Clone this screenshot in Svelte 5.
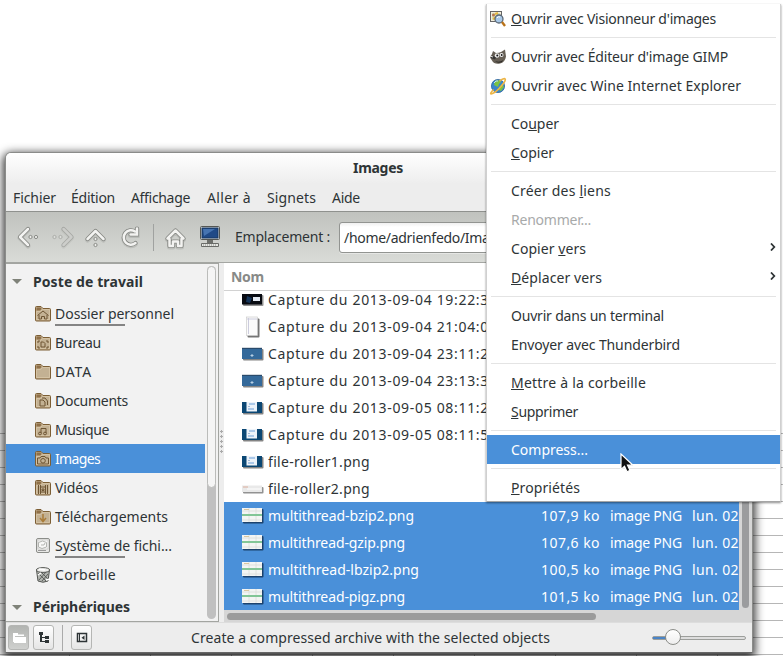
<script>
  function fit(node, width) {
    if (!width) return;
    const natural = node.getBoundingClientRect().width;
    const count = node.textContent.length;
    node.style.letterSpacing = `${(width - natural) / count}px`;
  }

  const menu = [
    { pre: '', key: 'O', post: "uvrir avec Visionneur d'images", w: 205, icon: 'viewer' },
    null,
    { pre: "Ouvrir avec Éditeur d'image GIMP", w: 217, icon: 'gimp' },
    { pre: 'Ouvrir avec Wine Internet Explorer', w: 230, icon: 'ie' },
    null,
    { pre: 'Co', key: 'u', post: 'per', w: 48 },
    { pre: '', key: 'C', post: 'opier', w: 43 },
    null,
    { pre: 'Créer des ', key: 'l', post: 'iens', w: 100 },
    { pre: 'Renommer...', w: 80, off: true },
    { pre: 'Copier ', key: 'v', post: 'ers', w: 75, sub: true },
    { pre: '', key: 'D', post: 'éplacer vers', w: 91, sub: true },
    null,
    { pre: 'Ouvrir dans un terminal', w: 153 },
    { pre: 'Envoyer avec Thunderbird', w: 169 },
    null,
    { pre: '', key: 'M', post: 'ettre à la corbeille', w: 135 },
    { pre: '', key: 'S', post: 'upprimer', w: 67 },
    null,
    { pre: 'Compress...', w: 77, on: true },
    null,
    { pre: '', key: 'P', post: 'ropriétés', w: 69 }
  ];

  const bar = [['Fichier', 43, 15], ['Édition', 44, 16], ['Affichage', 59, 17], ['Aller à', 44, 16], ['Signets', 49, 16], ['Aide', 28, 0]];

  const places = [
    ['Dossier personnel', 119, 'home', true],
    ['Bureau', 46, 'desk'],
    ['DATA', 37, 'plain'],
    ['Documents', 73, 'doc'],
    ['Musique', 54, 'music'],
    ['Images', 45, 'photo'],
    ['Vidéos', 43, 'video'],
    ['Téléchargements', 113, 'down'],
    ['Système de fichi...', 117, 'disk', true],
    ['Corbeille', 61, 'trash']
  ];

  const files = [
    ['Capture du 2013-09-04 19:22:32.png', 262, 'dark'],
    ['Capture du 2013-09-04 21:04:03.png', 262, 'page'],
    ['Capture du 2013-09-04 23:11:24.png', 262, 'blue'],
    ['Capture du 2013-09-04 23:13:33.png', 262, 'blue'],
    ['Capture du 2013-09-05 08:11:25.png', 262, 'shot'],
    ['Capture du 2013-09-05 08:11:53.png', 262, 'shot'],
    ['file-roller1.png', 102, 'shot'],
    ['file-roller2.png', 102, 'strip'],
    ['multithread-bzip2.png', 146, 'sheet', '107,9 ko'],
    ['multithread-gzip.png', 137, 'sheet', '107,6 ko'],
    ['multithread-lbzip2.png', 151, 'sheet', '100,5 ko'],
    ['multithread-pigz.png', 137, 'sheet', '101,5 ko']
  ];
</script>

{#snippet placeIcon(kind)}
  <svg class="pi" width="16" height="16" viewBox="0 0 16 16">
    {#if kind === 'disk'}
      <rect x="1.500" y=".5" width="13" height="14" rx="1.500" fill="#e8e8e6" stroke="#8b8d89" />
      <rect x="3" y="2" width="10" height="9" fill="#f8f8f7" stroke="#bbb" stroke-width=".6" />
      <path d="M3.500 9V4.500q4-3 8 0v4.500q-5 3-8 0M6 7q4 1 4-2" fill="none" stroke="#b3b5b1" />
      <path d="M3 12.500h8" stroke="#999" />
    {:else if kind === 'trash'}
      <path d="M1.500 3l1.500 11q5 2.500 10 0l1.500-11z" fill="#b2b5b0" stroke="#555753" />
      <ellipse cx="8" cy="3" rx="6.700" ry="2.400" fill="#eeeeec" stroke="#555753" />
      <path d="M3 6l8 8M6 5l7 7M11 5l-7 8M13 7l-6 7" stroke="#555753" stroke-width=".9" />
      <path d="M4 2l6 1M3 8l3-2M11 13l4-1" stroke="#fff" stroke-width="1.400" />
    {:else}
      <path d="M.5 14V1.500q0-1 1-1h4.500l2 2h6.500q1 0 1 1V14q0 1-1 1h-13q-1 0-1-1z" fill="#c0ac8d" stroke="#7c5e34" />
      <path d="M1.500 1.500h4l1 1.500-1.500 1.500h-3.500z" fill="#8f7048" />
      <path d="M1.500 13.500v-8h4l2-2h7v10z" fill="#c3b193" stroke="#d8c7a8" stroke-width=".8" />
      <g fill="none" stroke="#6e5533" stroke-width="1">
        {#if kind === 'home'}
          <path d="M2.500 9.500l5.500-4.500 5.500 4.500M4 9v4h2.500v-2.500h3V13h2.500V9" />
        {:else if kind === 'desk'}
          <path d="M3 8V6h2M11 6h2v2M3 11v2h2M11 13h2v-2M6 7h2.500l1.500 1.500V12H6z" />
        {:else if kind === 'doc'}
          <path d="M5 7h3l2 2v4H5zM7 5h3l2.500 3v4" />
        {:else if kind === 'music'}
          <path d="M6 11V6.500h5V11" /><circle cx="5" cy="11.500" r="1.400" /><circle cx="10" cy="11.500" r="1.400" />
        {:else if kind === 'photo'}
          <path d="M2.500 7H5l1-1.500h4L11 7h2.500v6h-11z" /><circle cx="8" cy="9.800" r="2.300" />
        {:else if kind === 'video'}
          <path d="M3.500 5v9M12.500 5v9M5.500 5v9M10.500 5v9M5.500 7h5M5.500 12h5M7 9h2v1.500H7z" />
        {:else if kind === 'down'}
          <path d="M8 5v7M5 9l3 3.500L11 9" stroke="#a97b38" stroke-width="1.500" />
        {/if}
      </g>
    {/if}
  </svg>
{/snippet}

{#snippet thumb(kind)}
  <svg class="th" width="24" height="24" viewBox="0 0 24 24">
    {#if kind === 'dark'}
      <rect x="2" y="7" width="20.500" height="11" rx="1" fill="#777" opacity=".8" />
      <rect x="1" y="6" width="20" height="10.500" fill="#080b12" /><path d="M6 8l5 2-2 5-4-1z" fill="#16355a" /><rect x="12" y="9" width="7" height="4" fill="#e2e8f1" />
    {:else if kind === 'page'}
      <rect x="6.500" y="3.500" width="12" height="19" rx="1" fill="#666" opacity=".9" />
      <rect x="5.500" y="2" width="11" height="18.500" fill="#fbfbfb" stroke="#ccc" stroke-width=".7" /><path d="M7.500 3v16M6 4h10" stroke="#ccd" />
    {:else if kind === 'blue'}
      <rect x="2" y="7" width="20.500" height="11.500" rx="1" fill="#777" opacity=".9" />
      <rect x="1" y="6" width="20" height="11" fill="#34699a" /><path d="M1 6.300h20" stroke="#27435f" /><path d="M9.500 13.500h3M11 12v3" stroke="#b7d0e5" />
    {:else if kind === 'shot'}
      <rect x="2" y="7" width="20.500" height="11.500" rx="1" fill="#777" opacity=".9" />
      <rect x="1" y="6" width="20" height="11" fill="#0b4774" /><rect x="5.500" y="6" width="10.500" height="9.500" fill="#edf3fa" /><path d="M8 8h6M7 13h6" stroke="#6b9fd8" /><path d="M7 10.500h2" stroke="#a5bdd8" />
    {:else if kind === 'strip'}
      <rect x="2" y="10" width="20.500" height="6.500" rx="1" fill="#777" opacity=".8" />
      <rect x="1" y="8.500" width="20" height="6.500" fill="#e9e9e9" /><path d="M2 10h5" stroke="#dcae9c" /><path d="M6 12h14" stroke="#fff" />
    {:else}
      <rect x="2" y="5" width="20.500" height="14.500" rx="1" fill="#173a60" opacity=".9" />
      <rect x="1" y="4" width="20" height="14" fill="#f3f5f4" /><path d="M1 7h20M1 16h20M8 4v14M15 4v14" stroke="#d9ddda" stroke-width=".8" /><path d="M1 11h20" stroke="#82c697" stroke-width="2" /><path d="M3 5.500h5" stroke="#d9c7a1" />
    {/if}
  </svg>
{/snippet}

{#snippet menuIcon(kind)}
  <svg class="mi" width="16" height="16" viewBox="0 0 16 16">
    {#if kind === 'viewer'}
      <rect x=".5" y=".5" width="11" height="10" fill="#f2eedd" stroke="#666" /><path d="M2 2h8v7H2z" fill="#d9dfb9" /><circle cx="3.500" cy="4" r="1.500" fill="#ba7650" /><path d="M5 3l3-1M3 8l4-2" stroke="#e7b940" stroke-width="2" />
      <circle cx="9" cy="8" r="4" fill="#a9c9e8" stroke="#5b6774" stroke-width="1.300" /><path d="M7 7q1-2 3-1" stroke="#fff" fill="none" /><path d="M12 11l3 4" stroke="#b97218" stroke-width="2.400" />
    {:else if kind === 'gimp'}
      <path d="M2 5l1-3 3 2q3 0 5-1l4-2.500 1 7q-1 6-6 7-6 1-8-3l-2-3z" fill="#665f55" /><path d="M5 12q5 2 8-1l-1 2q-4 2-7-1" fill="#2b2926" />
      <circle cx="7" cy="6.500" r="2.300" fill="#eee" /><circle cx="11.500" cy="6" r="2" fill="#eee" /><circle cx="7.300" cy="6.600" r="1" fill="#111" /><circle cx="11.700" cy="6" r=".9" fill="#111" /><path d="M1 9l4 1.500 1-2-4-2z" fill="#333" /><path d="M0 7l3 1" stroke="#ddd" />
    {:else}
      <circle cx="8" cy="8" r="6.600" fill="#3a86cc" stroke="#1f5a92" stroke-width=".7" /><path d="M5 3q4-2 6 1l-2 2-1 3-4-2zM9 9l3-3 2 3-3 4-2-1z" fill="#7cc343" /><path d="M4 5q2-3 4-2" stroke="#c1e2fa" fill="none" />
      <path d="M3.500 11.500Q-1.500 17 2.500 15.500 6 14 11 8.500 16.500 2 15 .8 13.500 0 9.500 3" fill="none" stroke="#edb545" stroke-width="1.700" />
    {/if}
  </svg>
{/snippet}

<div class="screen">
  <div class="sheet"></div>
  <div class="ticks"></div>
  <main class="window">
    <header class="title"><b use:fit={50}>Images</b></header>
    <nav class="bar">
      {#each bar as [label, w, gap]}<span use:fit={w} style:margin-right="{gap}px">{label}</span>{/each}
    </nav>
    <div class="tools">
      <svg class="nav" width="194" height="38" viewBox="0 0 194 38" fill="none">
        {#snippet glyphs()}
          <path d="M22 11l-8 8 8 8" />
          <path d="M57.500 11l8 8-8 8" opacity=".5" />
          <path d="M81.500 21l8-8 8 8" />
          <path d="M129.500 25a7.200 7.200 0 1 1-.5-11.500" />
          <path d="M124.500 16.500h6.500v-6" stroke-linejoin="miter" />
          <path d="M161.500 20.500l8-8 8 8M163.500 21v7h3.500v-4.500h5V28h3.500v-7" />
        {/snippet}
        <g transform="translate(0 1)" stroke="#a0a29e" stroke-width="5" stroke-linecap="round" stroke-linejoin="round" opacity=".4">{@render glyphs()}</g>
        <g stroke="#858783" stroke-width="4.200" stroke-linecap="round" stroke-linejoin="round">{@render glyphs()}</g>
        <g stroke="#f3f3f1" stroke-width="2.500" stroke-linecap="round" stroke-linejoin="round">{@render glyphs()}</g>
        <g fill="#eeeeec" stroke="#898b86">
          <circle cx="24.500" cy="19" r="1.600" /><circle cx="30" cy="19" r="1.600" />
          <g opacity=".5"><circle cx="48.500" cy="19" r="1.600" /><circle cx="54.500" cy="19" r="1.600" /></g>
          <circle cx="89.500" cy="21" r="1.600" /><circle cx="89.500" cy="27" r="1.600" />
        </g>
        <path d="M147.500 6v27" stroke="#a0a2a0" />
      </svg>
      <svg class="pc" width="22" height="24" viewBox="0 0 22 24">
        <rect x="1.500" y="1.500" width="19" height="13" rx="1" fill="#e4e5e1" stroke="#555753" />
        <rect x="3" y="3" width="16" height="10" fill="#204a87" stroke="#173761" /><path d="M4 4h12L5 11z" fill="#5b8bc8" opacity=".65" />
        <path d="M8 15h6v3H8z" fill="#6d6f6b" /><path d="M2.500 18.500h17v3h-17z" fill="#e6e8e3" stroke="#6a6c68" /><path d="M4 20h14" stroke="#888" stroke-dasharray="1 1" />
      </svg>
      <span class="loc" use:fit={95}>Emplacement :</span>
      <div class="field"><span use:fit={168}>/home/adrienfedo/Images</span></div>
    </div>
    <section class="body">
      <aside>
        <div class="list">
          <h2><i></i><span use:fit={110}>Poste de travail</span></h2>
          {#each places as [label, w, kind, used]}
            <div class="place" class:on={kind === 'photo'} class:used>
              {@render placeIcon(kind)}<span use:fit={w}>{label}</span>
            </div>
          {/each}
          <h2 class="second"><i></i><span use:fit={97}>Périphériques</span></h2>
        </div>
        <div class="scroll"><div></div></div>
      </aside>
      <div class="grip"></div>
      <div class="content">
        <div class="grid">
          <div class="head"><span use:fit={33}>Nom</span></div>
          <div class="rows">
            {#each files as [name, w, kind, size]}
              <div class="row" class:on={size}>
                {@render thumb(kind)}<span class="name"><span use:fit={w}>{name}</span></span>
                {#if size}
                  <span class="size"><span use:fit={59}>{size}</span></span>
                  <span class="type"><span use:fit={72}>image PNG</span></span>
                  <span class="date"><span use:fit={47}>lun. 02</span></span>
                {/if}
              </div>
            {/each}
          </div>
        </div>
        <div class="vtrack"><div></div></div>
        <div class="htrack"><div></div></div>
      </div>
    </section>
    <footer>
      <span class="btn down"><svg width="16" height="16" viewBox="0 0 16 16"><path d="M2 3h5v1.500h6V6H4v6H2zM5 7h10v6H3V7z" fill="#fff" /></svg></span>
      <span class="btn"><svg width="16" height="16" viewBox="0 0 16 16"><path d="M3 2h4v3H3zM4 5h2v7H4zM6 7h3V6h4v3H9V8H6zM6 11h3v-1h4v3H9v-1H6z" fill="#2e3436" /></svg></span>
      <span class="sep"></span>
      <span class="btn"><svg width="16" height="16" viewBox="0 0 16 16"><path d="M3.500 3.500h9v8h-9z" fill="none" stroke="#2e3436" stroke-width="1.500" /><path d="M5.500 3v9" stroke="#2e3436" /><path d="M10.500 5.500v4.500L7.500 7.700z" fill="#2e3436" /></svg></span>
      <span class="status"><span use:fit={359}>Create a compressed archive with the selected objects</span></span>
      <div class="slider"><div class="fill"></div><div class="knob"></div></div>
    </footer>
  </main>

  <div class="menu">
    {#each menu as m}
      {#if m}
        <div class="item" class:off={m.off} class:on={m.on}>
          <span class="slot">{#if m.icon}{@render menuIcon(m.icon)}{/if}</span>
          <span use:fit={m.w}>{m.pre}{#if m.key}<u>{m.key}</u>{m.post}{/if}</span>
          {#if m.sub}<svg class="arrow" width="6" height="8" viewBox="0 0 6 8"><path d="M1 .5L4.300 4 1 7.500" fill="none" stroke="#2e3436" stroke-width="1.800" /></svg>{/if}
        </div>
      {:else}
        <hr />
      {/if}
    {/each}
  </div>
  <svg class="cursor" width="15" height="22" viewBox="0 0 15 22"><path d="M1 1v15.500l3.500-3.200 2.500 5.500 3-1.400-2.500-5.200H13z" fill="#111" stroke="#fff" stroke-width="1.200" /></svg>
</div>

<style>
  .screen { position: relative; width: 783px; height: 656px; overflow: hidden; background: #fff; color: #2e3436; font: 14px/20px "Noto Sans", "Open Sans", sans-serif; white-space: nowrap; }
  span, b { flex: none; }
  .sheet { position: absolute; inset: 433px 0 0; background: repeating-linear-gradient(#b6b6b6 0 1px, #fff 1px 17px); }
  .ticks { position: absolute; inset: 654px 0 0; background: repeating-linear-gradient(90deg, transparent 0 69px, #aaa 69px 70px, transparent 70px 81px); }
  .window { position: absolute; left: 5px; top: 152px; width: 748px; height: 501px; box-sizing: border-box; border: 1px solid #8b8c8a; border-bottom-color: #666; border-radius: 6px 6px 0 0; background: #ededed; box-shadow: 0 3px 10px 2px rgba(0,0,0,.8); display: flex; flex-direction: column; overflow: hidden; }
  .title { height: 31px; background: linear-gradient(#fff, #ededed); text-align: center; line-height: 30px; padding-right: 2px; }
  .title b { display: inline-block; }
  .bar { height: 27px; display: flex; padding-left: 7px; line-height: 28px; border-bottom: 1px solid #8f918e; }
  .tools { height: 50px; display: flex; background: linear-gradient(#c0c2be, #d9dbd7); border-bottom: 1px solid #a4a6a2; align-items: center; flex: none; }
  .nav { flex: none; margin-top: -1px; }
  .pc { flex: none; margin-left: -1px; }
  .loc { margin-left: 14px; }
  .field { margin-left: 9px; width: 405px; height: 31px; box-sizing: border-box; border: 1px solid #929491; border-radius: 3px; background: linear-gradient(#f0f0f0, #fff 4px); padding-left: 4px; line-height: 29px; display: flex; box-shadow: 0 1px #e6e7e5; }
  .body { height: 359px; display: flex; flex: none; }
  aside { width: 213px; box-sizing: border-box; border: 1px solid #a3a5a1; border-left: 0; background: #f2f2f2; display: flex; overflow: hidden; }
  .list { width: 199px; }
  h2 { margin: 0; height: 35px; font-size: 14px; line-height: 36px; display: flex; align-items: center; }
  h2 i { border: 5px solid transparent; border-top: 5px solid #7f8279; border-bottom: 0; margin: 0 11px 0 6px; }
  h2.second { height: 36px; }
  .place { display: flex; align-items: center; height: 29px; padding-left: 29px; line-height: 29px; position: relative; }
  .pi { flex: none; margin-right: 4px; }
  .used::after { content: ""; position: absolute; left: 49px; bottom: 2px; width: 70px; height: 2px; background: #848484; }
  .on { background: #4a90d9; color: #fff; }
  .scroll { width: 9px; margin: 2px 0 2px 2px; background: #c0c0c0; border-radius: 5px; }
  .scroll div { box-sizing: border-box; height: 222px; border: 1px solid #bbbcba; border-radius: 5px; background: #f5f5f5; }
  .grip { width: 5px; background: radial-gradient(circle, #aaa 1px, transparent 1.300px) 0 166px / 5px 5px repeat-y; clip-path: inset(166px 0 167px 0); }
  .content { width: 528px; display: grid; grid-template: 347px 12px / 515px 13px; background: #d6d6d6; }
  .grid { background: #fff; overflow: hidden; display: flex; flex-direction: column; }
  .head { height: 27px; flex: none; line-height: 28px; padding-left: 7px; border-bottom: 1px solid #d2d2d2; color: #888a87; font-weight: bold; display: flex; }
  .rows { flex: 1; min-height: 0; overflow: hidden; display: flex; flex-direction: column; justify-content: flex-end; }
  .row { height: 27px; flex: none; display: flex; align-items: center; padding-left: 17px; }
  .th { flex: none; margin-right: 3px; }
  .name { width: 273px; }
  .name span, .size span, .type span, .date span, .status span { display: inline-block; }
  .size { width: 69px; }
  .type { width: 82px; }
  .vtrack { padding: 2px 3px; display: flex; }
  .vtrack div { width: 7px; border-radius: 4px; background: #9b9c9e; }
  .htrack { grid-column: 1 / 3; padding: 3px 3px 2px; }
  .htrack div { width: 369px; height: 7px; border-radius: 4px; background: #9b9b9b; }
  footer { flex: 1; display: flex; align-items: center; border-top: 1px solid #ddd; padding-left: 2px; background: #ededed; }
  .btn { width: 21px; height: 25px; box-sizing: border-box; border: 1px solid #b5b6b4; border-radius: 3px; background: linear-gradient(#fff, #e5e5e5); display: flex; align-items: center; justify-content: center; margin-right: 4px; }
  .btn.down { background: linear-gradient(#b2b4b1, #cfd0ce); }
  .btn svg { flex: none; }
  .sep { width: 1px; height: 26px; background: #aaa; margin: 0 8px 0 4px; }
  .status { margin-left: 95px; }
  .slider { position: relative; margin-left: 102px; width: 94px; height: 4px; box-sizing: border-box; border: 1px solid #9c9e9b; border-radius: 2px; background: #ddd; }
  .fill { width: 18px; height: 2px; background: #4a84c6; }
  .knob { position: absolute; left: 12px; top: -8px; width: 16px; height: 16px; box-sizing: border-box; border: 1px solid #8b8d89; border-radius: 50%; background: linear-gradient(#fff, #eee); }
  .menu { position: absolute; left: 486px; top: 4px; width: 295px; height: 498px; box-sizing: border-box; border: 1px solid #d0d0d0; border-top: 0; border-bottom-color: #a5a5a5; background: #fff; box-shadow: 0 1px 2px rgba(0,0,0,.45); }
  .item { height: 29px; display: flex; align-items: center; line-height: 29px; }
  .slot { width: 24px; height: 16px; padding-left: 3px; box-sizing: border-box; display: flex; }
  .mi { overflow: visible; flex: none; }
  .arrow { margin-left: auto; margin-right: 4px; margin-top: -3px; flex: none; }
  .off { color: #a8aaaa; }
  hr { margin: 4px 4px; border: 0; height: 1px; background: #e4e4e4; }
  u { text-decoration: underline 1px; text-underline-offset: 1px; text-decoration-skip-ink: none; }
  .cursor { position: absolute; left: 620px; top: 453px; }
</style>
